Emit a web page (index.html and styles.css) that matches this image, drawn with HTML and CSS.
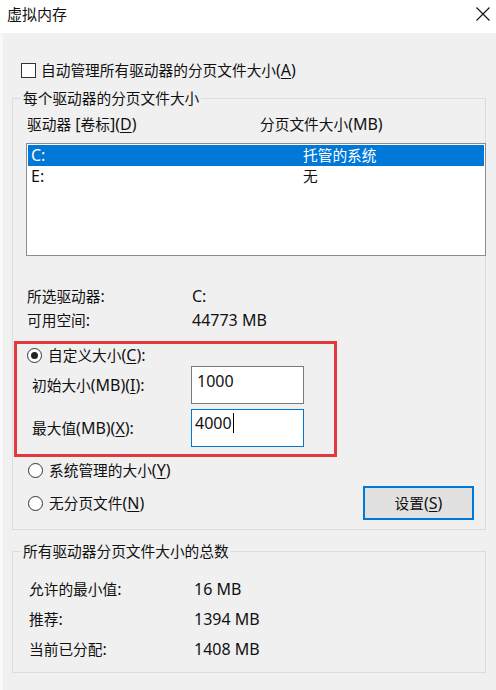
FILE: index.html
```html
<!DOCTYPE html>
<html lang="zh-CN">
<head>
<meta charset="utf-8">
<title>虚拟内存</title>
<link rel="stylesheet" href="styles.css">
</head>
<body>
<div class="window">
  <div class="titlebar">
    <span class="title">虚拟内存</span>
    <svg class="close" width="14" height="14" viewBox="0 0 14 14"><path d="M0.5 0.5 L13.5 13.5 M13.5 0.5 L0.5 13.5" stroke="#111" stroke-width="1.1" fill="none"/></svg>
  </div>
  <div class="content">
    <div class="check-row">
      <span class="checkbox"></span>
      <span>自动管理所有驱动器的分页文件大小<span class="l">(<u>A</u>)</span></span>
    </div>

    <fieldset class="group g1">
      <legend>每个驱动器的分页文件大小</legend>
      <div class="cols">
        <span>驱动器<span class="l"> [</span>卷标<span class="l">](<u>D</u>)</span></span>
        <span>分页文件大小<span class="l">(MB)</span></span>
      </div>
      <div class="listbox">
        <div class="lrow sel"><span class="l">C:</span><span>托管的系统</span></div>
        <div class="lrow"><span class="l">E:</span><span>无</span></div>
      </div>
      <div class="info">
        <span>所选驱动器<span class="l">:</span></span><span class="l">C:</span>
        <span>可用空间<span class="l">:</span></span><span class="l">44773 MB</span>
      </div>
      <div class="highlight">
        <div class="radio-row first">
          <span class="radio checked"></span>
          <span>自定义大小<span class="l">(<u>C</u>):</span></span>
        </div>
        <div class="field-row">
          <span>初始大小<span class="l">(MB)(<u>I</u>):</span></span>
          <div class="textbox"><span class="l">1000</span></div>
        </div>
        <div class="field-row second">
          <span>最大值<span class="l">(MB)(<u>X</u>):</span></span>
          <div class="textbox focused"><span class="l">4000</span><span class="caret"></span></div>
        </div>
      </div>
      <div class="radio-row plain">
        <span class="radio"></span>
        <span>系统管理的大小<span class="l">(<u>Y</u>)</span></span>
      </div>
      <div class="last-row">
        <div class="radio-row inline">
          <span class="radio"></span>
          <span>无分页文件<span class="l">(<u>N</u>)</span></span>
        </div>
        <div class="button"><span>设置<span class="l">(<u>S</u>)</span></span></div>
      </div>
    </fieldset>

    <fieldset class="group g2">
      <legend>所有驱动器分页文件大小的总数</legend>
      <div class="totals">
        <span>允许的最小值<span class="l">:</span></span><span class="l">16 MB</span>
        <span>推荐<span class="l">:</span></span><span class="l">1394 MB</span>
        <span>当前已分配<span class="l">:</span></span><span class="l">1408 MB</span>
      </div>
    </fieldset>
  </div>
</div>
</body>
</html>
```

FILE: styles.css
```css
html, body {
  margin: 0;
  padding: 0;
}
body {
  width: 496px;
  height: 690px;
  overflow: hidden;
  background: #f0f0f0;
  font-family: "Noto Sans", "Noto Sans CJK SC", sans-serif;
  font-size: 14.7px;
  color: #111;
}
.l {
  font-size: 16px;
}
u {
  text-underline-offset: 2px;
  text-decoration-thickness: 1px;
}
.window {
  width: 496px;
  height: 690px;
  display: flex;
  flex-direction: column;
}
.titlebar {
  height: 33px;
  background: #fff;
  display: flex;
  justify-content: space-between;
  align-items: flex-start;
  flex-shrink: 0;
}
.title {
  font-size: 15px;
  line-height: 20px;
  margin: 4px 0 0 7px;
}
.close {
  margin: 7px 6px 0 0;
}
.content {
  flex: 1;
  border-left: 3px solid #f8f8f8;
  padding: 0 10px 0 9px;
}
.check-row {
  margin-top: 29px;
  height: 16px;
  line-height: 16px;
  display: flex;
  align-items: center;
  gap: 5px;
  padding-left: 9px;
}
.checkbox {
  width: 13px;
  height: 13px;
  border: 1px solid #333;
  background: #fff;
  flex-shrink: 0;
}
.group {
  margin: 11px 0 0 0;
  padding: 0;
  border: 1px solid #dcdcdc;
  min-width: 0;
}
.group legend {
  margin-left: 8px;
  padding: 0 2px;
  line-height: 18px;
  height: 18px;
}
.g1 {
  padding-bottom: 9px;
}
.cols {
  margin-top: 8px;
  line-height: 18px;
  padding-left: 14px;
  display: grid;
  grid-template-columns: 233px auto;
}
.listbox {
  margin: 10px -1px 0 13px;
  height: 113px;
  box-sizing: border-box;
  border: 1px solid #8c8c8c;
  background: #fff;
  padding: 1px;
}
.lrow {
  height: 21px;
  line-height: 21px;
  padding-left: 3px;
  display: grid;
  grid-template-columns: 272px auto;
}
.lrow.sel {
  background: #0078d7;
  color: #fff;
}
.info {
  margin-top: 28px;
  padding-left: 14px;
  display: grid;
  grid-template-columns: 165px auto;
  grid-auto-rows: 24px;
  align-items: center;
  line-height: 20px;
}
.highlight {
  margin: 9px 0 0 1px;
  width: 317px;
  border: 3px solid #e0393e;
  padding-bottom: 7px;
}
.radio-row {
  display: flex;
  align-items: center;
  gap: 6px;
  height: 18px;
  line-height: 18px;
}
.radio-row.first {
  margin-top: 2px;
  padding-left: 10px;
}
.radio-row.plain {
  margin-top: 4px;
  padding-left: 15px;
}
.radio {
  width: 13px;
  height: 13px;
  border: 1px solid #333;
  border-radius: 50%;
  background: #fff;
  flex-shrink: 0;
  display: flex;
  align-items: center;
  justify-content: center;
}
.radio.checked::after {
  content: "";
  width: 7px;
  height: 7px;
  border-radius: 50%;
  background: #222;
}
.field-row {
  margin-top: 2px;
  display: grid;
  grid-template-columns: 159px 113px;
  padding-left: 15px;
  align-items: center;
  line-height: 20px;
}
.field-row.second {
  margin-top: 5px;
}
.textbox {
  height: 38px;
  box-sizing: border-box;
  border: 1px solid #7a7a7a;
  background: #fff;
  padding: 3px 0 0 5px;
  line-height: 22px;
  display: flex;
  align-items: center;
  align-self: start;
  align-items: flex-start;
}
.textbox.focused {
  border-color: #0078d7;
  padding-left: 3px;
  padding-top: 2px;
}
.caret {
  display: inline-block;
  width: 0;
  height: 20px;
  border-left: 1px solid #000;
  margin: 1px 0 0 1px;
}
.last-row {
  margin-top: 7px;
  display: flex;
  justify-content: space-between;
  align-items: center;
  padding: 0 11px 0 15px;
}
.button {
  width: 111px;
  height: 34px;
  box-sizing: border-box;
  border: 2px solid #0078d7;
  background: #e1e1e1;
  display: flex;
  align-items: center;
  justify-content: center;
  line-height: 18px;
}
.g2 {
  margin-top: 12px;
  padding-bottom: 8px;
}
.totals {
  margin-top: 14px;
  padding-left: 16px;
  display: grid;
  grid-template-columns: 165px auto;
  grid-auto-rows: 30px;
  align-items: center;
  line-height: 20px;
}
```
